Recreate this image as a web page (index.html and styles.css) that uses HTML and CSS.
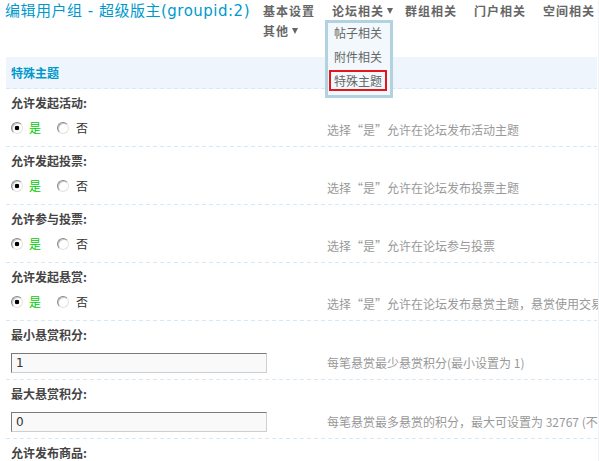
FILE: index.html
```html
<!DOCTYPE html>
<html lang="zh-CN">
<head>
<meta charset="utf-8">
<title>编辑用户组</title>
<link rel="stylesheet" href="styles.css">
</head>
<body>
<div class="page">
  <div class="topbar">
    <h3 class="title">编辑用户组 - 超级版主(groupid:2)</h3>
    <ul class="tabs">
      <li>基本设置</li>
      <li class="has-menu">论坛相关<i class="caret"></i>
        <div class="menu">
          <a>帖子相关</a>
          <a>附件相关</a>
          <a class="current">特殊主题</a>
        </div>
      </li>
      <li>群组相关</li>
      <li>门户相关</li>
      <li>空间相关</li>
      <li>其他<i class="caret"></i></li>
    </ul>
  </div>

  <div class="content">
    <div class="section-head">特殊主题</div>

    <div class="row">
      <div class="label">允许发起活动:</div>
      <div class="value">
        <div class="field"><input class="radio" type="radio" name="a" checked><span class="yes">是</span><input class="radio r2" type="radio" name="a"><span class="no">否</span></div>
        <div class="tip tip-radio">选择“是”允许在论坛发布活动主题</div>
      </div>
    </div>

    <div class="row">
      <div class="label">允许发起投票:</div>
      <div class="value">
        <div class="field"><input class="radio" type="radio" name="b" checked><span class="yes">是</span><input class="radio r2" type="radio" name="b"><span class="no">否</span></div>
        <div class="tip tip-radio">选择“是”允许在论坛发布投票主题</div>
      </div>
    </div>

    <div class="row">
      <div class="label">允许参与投票:</div>
      <div class="value">
        <div class="field"><input class="radio" type="radio" name="c" checked><span class="yes">是</span><input class="radio r2" type="radio" name="c"><span class="no">否</span></div>
        <div class="tip tip-radio">选择“是”允许在论坛参与投票</div>
      </div>
    </div>

    <div class="row">
      <div class="label">允许发起悬赏:</div>
      <div class="value">
        <div class="field"><input class="radio" type="radio" name="d" checked><span class="yes">是</span><input class="radio r2" type="radio" name="d"><span class="no">否</span></div>
        <div class="tip tip-radio">选择“是”允许在论坛发布悬赏主题，悬赏使用交易积分</div>
      </div>
    </div>

    <div class="row">
      <div class="label">最小悬赏积分:</div>
      <div class="value value-input">
        <div class="field"><input class="text" type="text" value="1"></div>
        <div class="tip">每笔悬赏最少悬赏积分(最小设置为 1)</div>
      </div>
    </div>

    <div class="row">
      <div class="label">最大悬赏积分:</div>
      <div class="value value-input">
        <div class="field"><input class="text" type="text" value="0"></div>
        <div class="tip">每笔悬赏最多悬赏的积分，最大可设置为 32767 (不能超过此值)</div>
      </div>
    </div>

    <div class="row">
      <div class="label">允许发布商品:</div>
    </div>
  </div>
</div>
</body>
</html>
```
FILE: styles.css
```css
* { box-sizing: border-box; }

html, body {
  margin: 0;
  padding: 0;
  background: #fff;
}

body {
  width: 599px;
  height: 461px;
  overflow: hidden;
  font: 12px/18px "Noto Sans CJK SC", sans-serif;
  color: #333;
}

.page {
  width: 599px;
  height: 461px;
  padding-left: 6px;
  border-right: 1px solid #f1f3f5;
  overflow: hidden;
}

/* ---------- top bar ---------- */
.topbar {
  display: flex;
  align-items: flex-start;
  padding-top: 1px;
  margin-left: -1px;
}

.title {
  flex: 0 0 258px;
  margin: 0;
  font: normal 15px/20px "DejaVu Sans", "Noto Sans CJK SC", sans-serif;
  letter-spacing: 0.5px;
  color: #0099cc;
  white-space: nowrap;
}

.tabs {
  flex: 1;
  display: flex;
  flex-wrap: wrap;
  column-gap: 17px;
  margin: 0;
  padding: 0;
  list-style: none;
}

.tabs li {
  position: relative;
  font-weight: bold;
  font-size: 12px;
  line-height: 20px;
  letter-spacing: 1px;
  color: #666;
  white-space: nowrap;
}

.caret {
  display: inline-block;
  width: 0;
  height: 0;
  margin: 0 -5px 0 3px;
  border-left: 3.5px solid transparent;
  border-right: 3.5px solid transparent;
  border-top: 6px solid #666;
  vertical-align: 2px;
}

.menu {
  position: absolute;
  left: -7px;
  top: 19px;
  width: 68px;
  padding: 0 0 4px;
  border: 3px solid #b1d2de;
  background: #f2f8fc;
  z-index: 5;
}

.menu a {
  display: block;
  width: 58px;
  height: 20px;
  margin: 0 0 4px 1px;
  padding-left: 5px;
  font-weight: normal;
  letter-spacing: 0;
  line-height: 20px;
  color: #666;
}

.menu a.current {
  height: 21px;
  margin-top: -1px;
  margin-bottom: 0;
  padding-left: 3px;
  line-height: 17px;
  border: 2px solid #e8141b;
}

/* ---------- content ---------- */
.content {
  width: 591px;
  margin-top: 16px;
}

.section-head {
  height: 32px;
  padding-left: 5px;
  line-height: 31px;
  font-weight: bold;
  color: #0099cc;
  background:
    repeating-linear-gradient(to right, #d4e8f7 0 4px, transparent 4px 7px) left bottom / 100% 1px no-repeat,
    #eef5fd;
}

.row {
  padding-bottom: 1px;
  background: repeating-linear-gradient(to right, #d4e8f7 0 4px, transparent 4px 7px) left bottom / 100% 1px no-repeat;
}

.label {
  height: 26px;
  padding: 5px 5px 3px;
  line-height: 18px;
  font-weight: bold;
  color: #444;
}

.value {
  display: flex;
  height: 31px;
  padding: 4px 0 9px;
  white-space: nowrap;
}

.value-input {
  height: 32px;
  padding: 6px 0 6px;
  align-items: center;
}

.field {
  display: flex;
  align-items: center;
  flex: 0 0 321px;
  height: 18px;
  padding-left: 5px;
}

.value-input .field {
  height: 20px;
}

.radio {
  -webkit-appearance: none;
  appearance: none;
  width: 12px;
  height: 12px;
  margin: 0;
  border-radius: 50%;
  border: 1px solid;
  border-color: #8a8a8a #e6e3dc #e6e3dc #8a8a8a;
  box-shadow: inset 1px 1px 0 #c8c8c8;
  background: #fff;
}

.radio:checked {
  background: radial-gradient(circle at 50% 50%, #000 0 2px, #fff 2.6px);
}

.yes {
  margin-left: 6px;
  color: #00cc00;
}

.r2 {
  margin-left: 16px;
}

.no {
  margin-left: 7px;
  color: #333;
}

.text {
  width: 256px;
  height: 20px;
  margin: 0;
  padding: 0 4px;
  border: 1px solid;
  border-color: #7a7a7a #cfcfcf #cfcfcf #7a7a7a;
  background: #f9f9f9;
  font: 12px/18px "DejaVu Sans", sans-serif;
  color: #333;
  outline: none;
}

.tip {
  color: #999;
  line-height: 18px;
}

.tip-radio {
  padding-top: 2px;
  height: 20px;
}
```
